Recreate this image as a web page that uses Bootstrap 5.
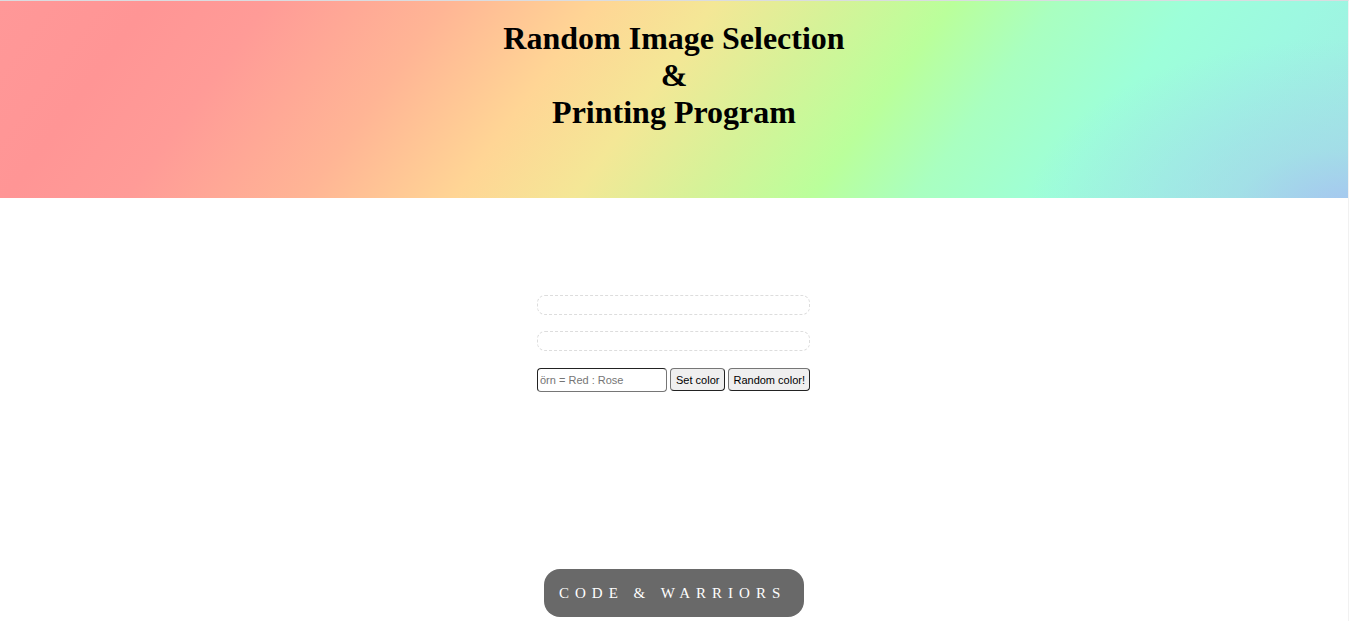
<!DOCTYPE html>
<html lang="en">
<head>
<meta charset="utf-8">
<meta name="viewport" content="width=device-width, initial-scale=1">
<title>Random Image Selection &amp; Printing Program</title>
<link href="https://cdn.jsdelivr.net/npm/bootstrap@5.3.0/dist/css/bootstrap.min.css" rel="stylesheet">
<style>
  body { border-top: 1px solid #dadce0; border-right: 1px solid #f1f1f1; }
  .hero {
    height: 197px;
    padding-top: 19px;
    background:
      radial-gradient(ellipse 320px 170px at 100% 105%, #a6c6f0 0%, #a5d3ea99 35%, #a2e0e600 100%),
      linear-gradient(126deg, #ff9898 0%, #ff9595 10%, #ff9b97 18%, #ffb595 30%, #ffd595 40%, #f4e796 48%, #d6f298 56%, #baff9b 64%, #a9ffc0 71%, #9dffd9 80%, #9df8e1 88%, #a0eae4 100%);
  }
  .hero h1 {
    font: bold 32px/37px "Liberation Serif", "Times New Roman", serif;
    color: #000;
  }
  .picker { width: 274px; padding: 97px 1px 0 0; }
  .slot { height: 20px; border: 1px dashed #ddd; border-radius: 8px; margin-bottom: 16px; }
  .picker form { gap: 3px; padding-top: 1px; }
  .picker input, .picker button {
    font: 11px/13px "Liberation Sans", Arial, sans-serif;
    border: 1px solid #767676;
    border-radius: 4px;
  }
  .picker input { height: 24px; padding: 0 2px; border-color: #222 #767676 #767676 #222; }
  .picker input::placeholder { color: #757575; opacity: 1; }
  .picker button { height: 23px; padding: 1px 4px 0; background: #efefef; color: #000; border-color: #767676 #222 #222 #767676; }
  .picker .set-btn { padding-left: 5px; padding-right: 5px; }
  .brand-pill {
    height: 48px;
    width: 260px;
    padding-left: 15px;
    margin-bottom: 4px;
    border-radius: 16px;
    background: #696969;
    color: #fff;
    font: 15px/48px "Liberation Serif", serif;
    letter-spacing: 6px;
  }
</style>
</head>
<body class="d-flex flex-column min-vh-100 bg-white">
<header class="hero text-center">
  <h1 class="m-0">Random Image Selection<br>&amp;<br>Printing Program</h1>
</header>
<main class="picker mx-auto">
  <div class="slot"></div>
  <div class="slot"></div>
  <form class="d-flex align-items-start">
    <input type="text" class="flex-fill" size="1" placeholder="örn = Red : Rose" aria-label="Color">
    <button type="button" class="flex-shrink-0 set-btn">Set color</button>
    <button type="button" class="flex-shrink-0">Random color!</button>
  </form>
</main>
<footer class="brand-pill mx-auto mt-auto text-nowrap">CODE &amp; WARRIORS</footer>
<script src="https://cdn.jsdelivr.net/npm/bootstrap@5.3.0/dist/js/bootstrap.bundle.min.js"></script>
</body>
</html>
